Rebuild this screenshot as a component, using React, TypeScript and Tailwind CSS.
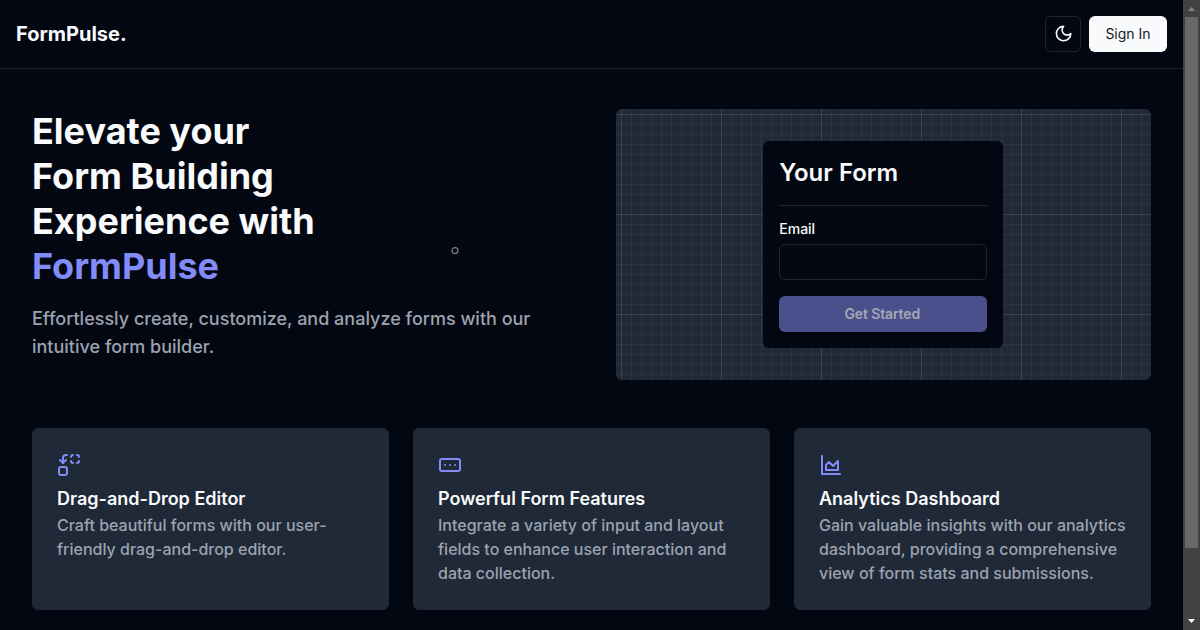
import type { ReactNode } from "react";

function Icon({ children, className }: { children: ReactNode; className: string }) {
  return (
    <svg
      className={className}
      viewBox="0 0 24 24"
      fill="none"
      stroke="currentColor"
      strokeWidth="2"
      strokeLinecap="round"
      strokeLinejoin="round"
    >
      {children}
    </svg>
  );
}

const features = [
  {
    title: "Drag-and-Drop Editor",
    text: "Craft beautiful forms with our user-friendly drag-and-drop editor.",
    icon: (
      <>
        <path d="M14 4c0-1.1.9-2 2-2" />
        <path d="M20 2c1.1 0 2 .9 2 2" />
        <path d="M22 8c0 1.1-.9 2-2 2" />
        <path d="M16 10c-1.1 0-2-.9-2-2" />
        <path d="m3 7 3 3 3-3" />
        <path d="M6 10V5c0-1.7 1.3-3 3-3h1" />
        <rect width="8" height="8" x="2" y="14" rx="2" />
      </>
    ),
  },
  {
    title: "Powerful Form Features",
    text: "Integrate a variety of input and layout fields to enhance user interaction and data collection.",
    icon: (
      <>
        <rect width="20" height="12" x="2" y="6" rx="2" />
        <path d="M12 12h.01" />
        <path d="M17 12h.01" />
        <path d="M7 12h.01" />
      </>
    ),
  },
  {
    title: "Analytics Dashboard",
    text: "Gain valuable insights with our analytics dashboard, providing a comprehensive view of form stats and submissions.",
    icon: (
      <>
        <path d="M3 3v18h18" />
        <path d="M7 12v5h12V8l-5 5-4-4Z" />
      </>
    ),
  },
];

function Header() {
  return (
    <header className="flex h-[69px] items-center justify-between border-b border-[#1f2630] px-4">
      <span className="text-xl font-bold">FormPulse.</span>
      <div className="flex gap-2">
        <button className="flex size-9 items-center justify-center rounded-md border border-[#1f2630] pl-px">
          <Icon className="size-[19.2px]">
            <path d="M12 3a6 6 0 0 0 9 9 9 9 0 1 1-9-9Z" />
          </Icon>
        </button>
        <button className="h-9 w-[78px] rounded-md bg-[#f9fafb] text-sm text-[#111827]">Sign In</button>
      </div>
    </header>
  );
}

function FormPreview() {
  return (
    <div className="flex flex-1 justify-center rounded-md bg-[#1f2937] bg-[linear-gradient(rgba(255,240,220,0.08)_1px,transparent_1px),linear-gradient(90deg,rgba(255,240,220,0.08)_1px,transparent_1px),linear-gradient(rgba(255,240,220,0.05)_1px,transparent_1px),linear-gradient(90deg,rgba(255,240,220,0.05)_1px,transparent_1px)] bg-[size:100px_100px,100px_100px,10px_10px,10px_10px] bg-[position:5px_5px] py-8">
      <div className="flex w-60 flex-col rounded-md bg-[#030712] p-4">
        <h2 className="border-b border-[#1f2630] pb-4 text-2xl font-semibold">Your Form</h2>
        <label htmlFor="email" className="mt-4 text-sm leading-none font-medium">
          Email
        </label>
        <input id="email" className="mt-2 h-9 rounded-md border border-[#1f2630] px-3 text-sm" />
        <button className="mt-4 h-9 rounded-md bg-[#4a508c] pr-0.5 text-sm font-semibold tracking-[-0.01em] text-[#a5a7b3]">
          Get Started
        </button>
      </div>
    </div>
  );
}

function Scrollbar() {
  return (
    <div className="flex w-[17px] shrink-0 flex-col items-center bg-[#424242]">
      <svg className="h-[17px] w-[17px] shrink-0" viewBox="0 0 17 17">
        <path d="M5 11h7L8.5 7z" fill="#868686" />
      </svg>
      <div className="h-[531px] w-[13px] bg-[#686868]" />
      <svg className="mt-auto h-[17px] w-[17px] shrink-0" viewBox="0 0 17 17">
        <path d="M5 6h7L8.5 10z" fill="#fff" />
      </svg>
    </div>
  );
}

export default function App() {
  return (
    <div className="flex h-[630px] w-[1200px] overflow-hidden bg-[#030712] font-['Inter',sans-serif] text-[#f9fafb]">
      <div className="relative min-w-0 flex-1">
        <Header />
        <main className="px-8 pt-10">
          <section className="flex gap-12">
            <div className="flex-1">
              <h1 className="text-4xl leading-tight font-bold">
                Elevate your
                <br />
                Form Building
                <br />
                Experience with
                <br />
                <span className="text-[#818cf8]">FormPulse</span>
              </h1>
              <p className="mt-4 text-lg leading-7 font-medium text-[#9ca3af]">
                Effortlessly create, customize, and analyze forms with our intuitive form builder.
              </p>
            </div>
            <FormPreview />
          </section>
          <section className="mt-12 grid grid-cols-3 gap-6">
            {features.map((feature) => (
              <article key={feature.title} className="rounded-md border border-[#1f2937] bg-[#1f2937] p-6">
                <Icon className="size-6 text-[#818cf8]">{feature.icon}</Icon>
                <h3 className="mt-2 text-lg leading-7 font-semibold">{feature.title}</h3>
                <p className="font-medium text-[#9ca3af]">{feature.text}</p>
              </article>
            ))}
          </section>
        </main>
        <svg className="absolute top-[246px] left-[450px] size-[10px]" viewBox="0 0 10 10">
          <circle cx="5" cy="4.6" r="3" fill="none" stroke="#7b7f88" strokeWidth="1.2" />
        </svg>
      </div>
      <Scrollbar />
    </div>
  );
}
